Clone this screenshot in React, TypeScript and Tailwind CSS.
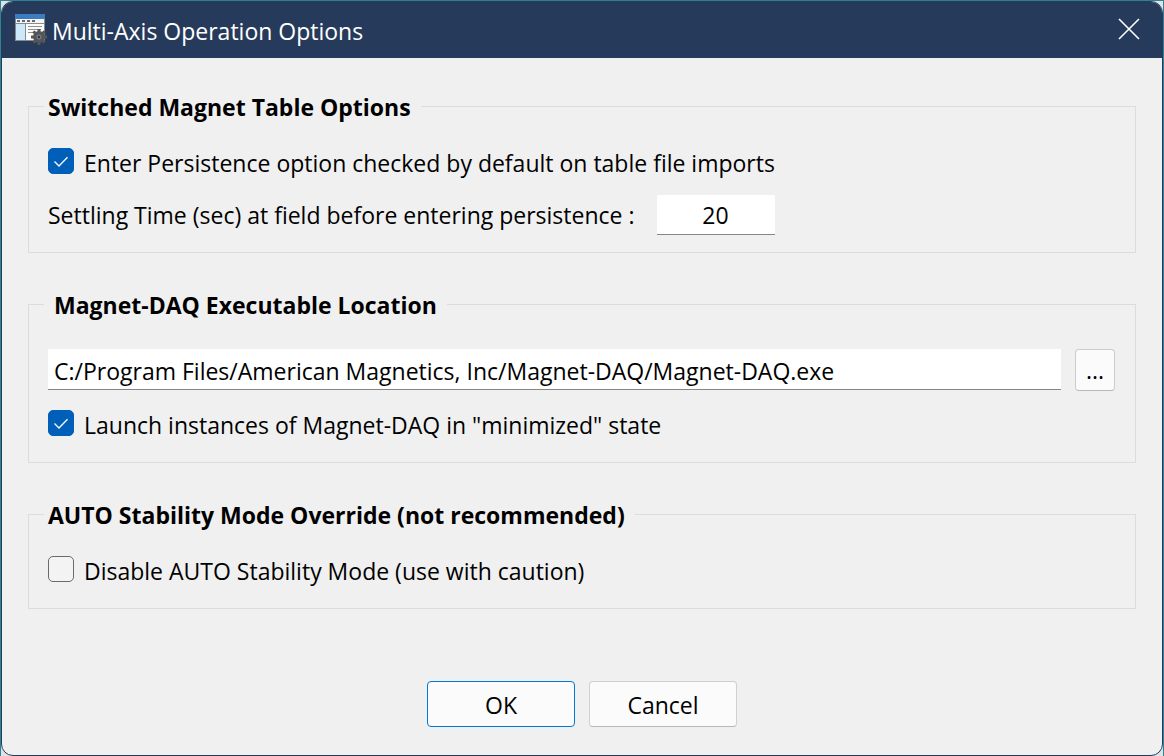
import { useState, type ReactNode } from "react";

function AppIcon() {
  return (
    <svg width="34" height="32" viewBox="0 0 34 32" aria-hidden="true" className="shrink-0">
      <rect x="1" y="0" width="30" height="27" fill="#8a8a8a" />
      <rect x="1" y="0" width="30" height="5" fill="#3b7cc0" />
      <rect x="2" y="5" width="28" height="4" fill="#f4f4f4" />
      <path d="M3 6h3v2H3zM8 6h3v2H8zM13 6h3v2h-3zM18 6h3v2h-3z" fill="#6b6b6b" />
      <rect x="2" y="10" width="9" height="16" fill="#cce8fb" />
      <rect x="12" y="10" width="18" height="16" fill="#fbfbfb" />
      <path d="M14 12.5h14M14 15.5h13M14 18.5h5" stroke="#8f8f8f" strokeWidth="1" />
      <g fill="#555555">
        <circle cx="25" cy="23" r="6" />
        <rect x="23.5" y="15" width="3" height="16" rx="0.5" />
        <rect x="23.5" y="15" width="3" height="16" rx="0.5" transform="rotate(45 25 23)" />
        <rect x="23.5" y="15" width="3" height="16" rx="0.5" transform="rotate(90 25 23)" />
        <rect x="23.5" y="15" width="3" height="16" rx="0.5" transform="rotate(135 25 23)" />
      </g>
      <circle cx="25" cy="23" r="2" fill="#263b5b" stroke="#8fa3bd" strokeWidth="0.8" />
    </svg>
  );
}

function Group({ title, indent, className, children }: { title: string; indent?: boolean; className: string; children: ReactNode }) {
  return (
    <fieldset className={`min-w-0 border border-[#dcdcdc] px-[19px] ${className}`}>
      <legend className={`-ml-1 pr-[10px] pt-[2px] font-bold leading-9 ${indent ? "pl-[10px]" : "pl-1"}`}>{title}</legend>
      {children}
    </fieldset>
  );
}

function Check({ label, initial }: { label: string; initial: boolean }) {
  const [checked, setChecked] = useState(initial);
  return (
    <label className="flex h-9 items-start gap-[10px] leading-10">
      <span className="mt-[5px] grid size-[26px] shrink-0">
        <input
          type="checkbox"
          checked={checked}
          onChange={(e) => setChecked(e.target.checked)}
          className="col-start-1 row-start-1 size-[26px] appearance-none rounded-[5px] border border-[#6a6a6a] bg-[#f3f3f3] checked:border-[#005fb8] checked:bg-[#005fb8]"
        />
        {checked && (
          <svg viewBox="0 0 26 26" fill="none" stroke="#ffffff" strokeWidth="1.3" className="pointer-events-none col-start-1 row-start-1 size-[26px]" aria-hidden="true">
            <path d="M6.5 13.5 11 18 19.5 9.2" />
          </svg>
        )}
      </span>
      <span>{label}</span>
    </label>
  );
}

const buttonBase = "h-[46px] w-[148px] rounded-[4px] border bg-[#fbfbfb] pt-[3px]";

export default function App() {
  const [settling, setSettling] = useState("20");
  const [path, setPath] = useState("C:/Program Files/American Magnetics, Inc/Magnet-DAQ/Magnet-DAQ.exe");
  return (
    <div className="flex min-h-screen border border-[#2d8294] bg-[#dfe3e6] font-['Open_Sans','Noto_Sans',sans-serif] text-[23px] text-black">
      <div className="flex min-w-0 flex-1 flex-col overflow-hidden rounded-xl border border-[#263b5b] bg-[#f0f0f0]">
        <header className="flex h-14 shrink-0 items-center bg-[#263b5b] pl-3 pr-[21px] text-white">
          <AppIcon />
          <h1 className="ml-1 flex-1 pt-[2px]">Multi-Axis Operation Options</h1>
          <button type="button" aria-label="Close" className="flex h-7 w-6 items-start justify-center pt-[2px]">
            <svg width="22" height="22" viewBox="0 0 22 22" fill="none" stroke="#ffffff" strokeWidth="1.6" aria-hidden="true">
              <path d="M1 1 21 21M21 1 1 21" />
            </svg>
          </button>
        </header>
        <main className="flex flex-col gap-8 px-[26px] pt-[29px] pb-7">
          <Group title="Switched Magnet Table Options" className="pb-[17px]">
            <div className="flex flex-col gap-4 pt-[18px]">
              <Check label="Enter Persistence option checked by default on table file imports" initial />
              <div className="flex items-center gap-[22px]">
                <label htmlFor="settling">Settling Time (sec) at field before entering persistence :</label>
                <input
                  id="settling"
                  value={settling}
                  onChange={(e) => setSettling(e.target.value)}
                  className="h-10 w-[118px] border-b border-[#868686] bg-white text-center outline-none"
                />
              </div>
            </div>
          </Group>
          <Group title="Magnet-DAQ Executable Location" indent className="pb-[21px]">
            <div className="flex flex-col gap-[14px] pt-[26px]">
              <div className="flex gap-[14px] pr-px">
                <input
                  aria-label="Magnet-DAQ executable path"
                  value={path}
                  onChange={(e) => setPath(e.target.value)}
                  className="h-[41px] min-w-0 flex-1 border-b border-[#868686] bg-white px-[6px] pt-[4px] outline-none"
                />
                <button type="button" aria-label="Browse" className="h-[42px] w-10 rounded-[4px] border border-[#cccccc] border-b-[#b8b8b8] bg-[#fbfbfb]">
                  ...
                </button>
              </div>
              <Check label={'Launch instances of Magnet-DAQ in "minimized" state'} initial />
            </div>
          </Group>
          <Group title="AUTO Stability Mode Override (not recommended)" className="pb-[21px]">
            <div className="pt-[18px]">
              <Check label="Disable AUTO Stability Mode (use with caution)" initial={false} />
            </div>
          </Group>
          <div className="flex justify-center gap-[14px] pt-10">
            <button type="button" className={`${buttonBase} border-[#0078d4]`}>OK</button>
            <button type="button" className={`${buttonBase} border-[#d0d0d0] border-b-[#b8b8b8]`}>Cancel</button>
          </div>
        </main>
      </div>
    </div>
  );
}
